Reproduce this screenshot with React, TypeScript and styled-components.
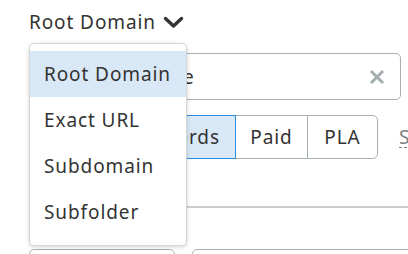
import { useState } from 'react';
import styled, { createGlobalStyle } from 'styled-components';

const GlobalStyle = createGlobalStyle`
    html, body {
        margin: 0;
        padding: 0;
        background: #ffffff;
        overflow: hidden;
    }
    body {
        font-family: 'Noto Sans', 'Open Sans', sans-serif;
        color: #333333;
        letter-spacing: 0.9px;
    }
`;

const Page = styled.div`
    position: relative;
    width: 372px;
    padding: 8px 0 0 29px;
    display: flex;
    flex-direction: column;
`;

const Trigger = styled.button`
    display: flex;
    align-items: center;
    gap: 7px;
    height: 28px;
    padding: 0;
    border: none;
    background: none;
    font-family: inherit;
    letter-spacing: inherit;
    font-size: 19px;
    color: #333333;
    cursor: pointer;
    align-self: flex-start;
`;

const SearchBox = styled.div`
    margin-top: 17px;
    height: 47px;
    box-sizing: border-box;
    border: 1px solid #a8b1b1;
    border-radius: 5px;
    display: flex;
    align-items: center;
    padding: 0 14px;
    gap: 10px;
`;

const SearchValue = styled.span`
    flex: 1;
    font-size: 19px;
    color: #333333;
    white-space: nowrap;
    overflow: hidden;
`;

const ClearButton = styled.span`
    display: flex;
    align-items: center;
    justify-content: center;
    color: #a5aeae;
`;

const SegmentRow = styled.div`
    margin-top: 15px;
    display: flex;
    align-items: center;
`;

const Segment = styled.button<{ $active?: boolean; $width: number; $first?: boolean; $last?: boolean }>`
    width: ${({ $width }) => $width}px;
    flex-shrink: 0;
    height: 44px;
    box-sizing: border-box;
    margin-left: ${({ $first }) => ($first ? 0 : -1)}px;
    font-family: inherit;
    letter-spacing: inherit;
    font-size: 19px;
    color: #333333;
    background: ${({ $active }) => ($active ? '#d9e8f7' : '#ffffff')};
    border: 1px solid ${({ $active }) => ($active ? '#2b8ce0' : '#a8b1b1')};
    border-radius: ${({ $first, $last }) =>
        $first ? '5px 0 0 5px' : $last ? '0 5px 5px 0' : '0'};
    position: relative;
    z-index: ${({ $active }) => ($active ? 1 : 0)};
    padding: 0;
    white-space: nowrap;
    cursor: pointer;
`;

const DashedLink = styled.span`
    margin-left: 21px;
    flex-shrink: 0;
    font-size: 19px;
    color: #777f80;
    border-bottom: 1px dashed #777f80;
    line-height: 20px;
    white-space: nowrap;
`;

const Divider = styled.div`
    margin-top: 47px;
    width: 420px;
    height: 2px;
    background: #cccccc;
`;

const BottomRow = styled.div`
    margin-top: 41px;
    display: flex;
    gap: 17px;
`;

const BottomBox = styled.div<{ $width: number }>`
    width: ${({ $width }) => $width}px;
    height: 40px;
    flex-shrink: 0;
    box-sizing: border-box;
    border: 1px solid #a8b1b1;
    border-radius: 5px;
`;

const Menu = styled.ul`
    position: absolute;
    left: 29px;
    top: 43px;
    width: 158px;
    margin: 0;
    padding: 7px 0 10px;
    list-style: none;
    background: #ffffff;
    border: 1px solid #d3d7d7;
    border-radius: 5px;
    box-sizing: border-box;
    box-shadow: 0 1px 4px rgba(0, 0, 0, 0.18);
    z-index: 10;
`;

const MenuItem = styled.li<{ $selected?: boolean }>`
    height: 46px;
    display: flex;
    align-items: center;
    padding: 0 14px;
    font-size: 19px;
    color: #333333;
    background: ${({ $selected }) => ($selected ? '#d9e8f7' : 'transparent')};
    white-space: nowrap;
    cursor: pointer;
`;

const options = ['Root Domain', 'Exact URL', 'Subdomain', 'Subfolder'];

const segments = [
    { label: 'Organic keywords', width: 207 },
    { label: 'Paid', width: 73 },
    { label: 'PLA', width: 71 },
];

export default function App() {
    const [scope] = useState('Root Domain');
    const [activeSegment] = useState(0);

    return (
        <>
            <GlobalStyle />
            <Page>
                <Trigger>
                    {scope}
                    <svg width="21" height="14" viewBox="0 0 21 14">
                        <path d="M2.5 3.5 L10.5 11 L18.5 3.5" fill="none" stroke="#333" strokeWidth="3.4" strokeLinecap="round" strokeLinejoin="round" />
                    </svg>
                </Trigger>
                <SearchBox>
                    <SearchValue>Enter a website</SearchValue>
                    <ClearButton>
                        <svg width="18" height="18" viewBox="0 0 18 18">
                            <path d="M3 3 L15 15 M15 3 L3 15" stroke="currentColor" strokeWidth="3" strokeLinecap="butt" />
                        </svg>
                    </ClearButton>
                </SearchBox>
                <SegmentRow>
                    {segments.map((s, i) => (
                        <Segment
                            key={s.label}
                            $width={s.width}
                            $active={i === activeSegment}
                            $first={i === 0}
                            $last={i === segments.length - 1}
                        >
                            {s.label}
                        </Segment>
                    ))}
                    <DashedLink>Settings</DashedLink>
                </SegmentRow>
                <Divider />
                <BottomRow>
                    <BottomBox $width={146} />
                    <BottomBox $width={240} />
                </BottomRow>
                <Menu>
                    {options.map((o) => (
                        <MenuItem key={o} $selected={o === scope}>
                            {o}
                        </MenuItem>
                    ))}
                </Menu>
            </Page>
        </>
    );
}
